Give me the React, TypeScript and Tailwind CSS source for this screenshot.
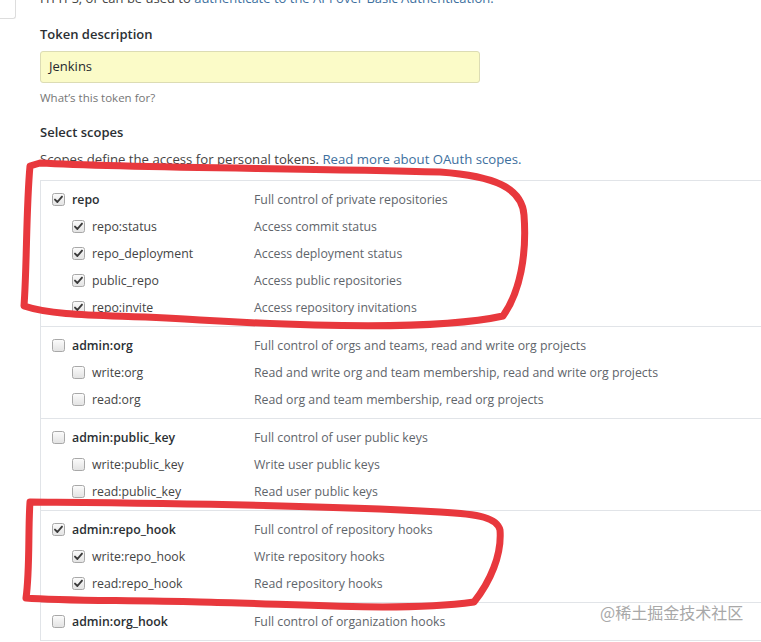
import React from 'react';

type Scope = { name: string; desc: string; checked: boolean; children: { name: string; desc: string; checked: boolean }[] };

const scopes: Scope[] = [
  {
    name: 'repo',
    desc: 'Full control of private repositories',
    checked: true,
    children: [
      { name: 'repo:status', desc: 'Access commit status', checked: true },
      { name: 'repo_deployment', desc: 'Access deployment status', checked: true },
      { name: 'public_repo', desc: 'Access public repositories', checked: true },
      { name: 'repo:invite', desc: 'Access repository invitations', checked: true },
    ],
  },
  {
    name: 'admin:org',
    desc: 'Full control of orgs and teams, read and write org projects',
    checked: false,
    children: [
      { name: 'write:org', desc: 'Read and write org and team membership, read and write org projects', checked: false },
      { name: 'read:org', desc: 'Read org and team membership, read org projects', checked: false },
    ],
  },
  {
    name: 'admin:public_key',
    desc: 'Full control of user public keys',
    checked: false,
    children: [
      { name: 'write:public_key', desc: 'Write user public keys', checked: false },
      { name: 'read:public_key', desc: 'Read user public keys', checked: false },
    ],
  },
  {
    name: 'admin:repo_hook',
    desc: 'Full control of repository hooks',
    checked: true,
    children: [
      { name: 'write:repo_hook', desc: 'Write repository hooks', checked: true },
      { name: 'read:repo_hook', desc: 'Read repository hooks', checked: true },
    ],
  },
  {
    name: 'admin:org_hook',
    desc: 'Full control of organization hooks',
    checked: false,
    children: [],
  },
];

function Box({ checked }: { checked: boolean }) {
  return (
    <svg width="13" height="13" viewBox="0 0 13 13" className="shrink-0">
      <defs>
        <linearGradient id="cbg" x1="0" y1="0" x2="0" y2="1">
          <stop offset="0" stopColor="#fcfcfc" />
          <stop offset="1" stopColor="#e2e2e2" />
        </linearGradient>
      </defs>
      <rect x="0.5" y="0.5" width="12" height="12" rx="2" fill="url(#cbg)" stroke="#a8a8a8" />
      {checked && <path d="M3 6.6 L5.4 9 L10 3.6" fill="none" stroke="#3a3a3a" strokeWidth="1.9" strokeLinecap="round" strokeLinejoin="round" />}
    </svg>
  );
}

function Row({ name, desc, checked, child }: { name: string; desc: string; checked: boolean; child?: boolean }) {
  return (
    <div className="grid grid-cols-[213px_1fr] h-[27px] items-center text-[12.3px] leading-[16px]">
      <div className={child ? 'flex items-center gap-[7px] pl-[31px]' : 'flex items-center gap-[7px] pl-[11px]'}>
        <Box checked={checked} />
        <span className={child ? 'pt-[1px] text-[#444]' : 'pt-[1px] font-semibold text-[#2b2f33]'}>{name}</span>
      </div>
      <div className="pt-[1px] text-[#5f656b] whitespace-nowrap">{desc}</div>
    </div>
  );
}

export default function App() {
  return (
    <div
      className="relative w-[761px] h-[642px] overflow-hidden bg-white text-[13px] flex"
      style={{ fontFamily: '"Open Sans", "Noto Sans", Arial, sans-serif' }}
    >
      <div className="w-[16px] h-[19px] border-r border-b border-[#ddd] rounded-br-[3px] shrink-0" />
      <div className="pl-[24px] flex-1 flex flex-col">
        <p className="leading-[20px] -mt-[12px] text-[#444] whitespace-nowrap">
          HTTPS, or can be used to <span className="text-[#3d6f9e]">authenticate to the API over Basic Authentication.</span>
        </p>
        <div className="leading-[20px] mt-[16px] text-[13px] font-semibold text-[#2b2f33]">Token description</div>
        <div className="mt-[7px] w-[440px] h-[32px] bg-[#fbfbc8] border border-[#dcdcb4] rounded-[3px] flex items-center px-[8px] text-[#24292e]">
          Jenkins
        </div>
        <div className="leading-[16px] mt-[7px] text-[11.5px] text-[#767676]">What’s this token for?</div>
        <div className="leading-[20px] mt-[16px] text-[13px] font-semibold text-[#2b2f33]">Select scopes</div>
        <div className="leading-[20px] mt-[7px] text-[13.2px] text-[#444]">
          Scopes define the access for personal tokens. <span className="text-[#3d6f9e]">Read more about OAuth scopes.</span>
        </div>
        <div className="mt-[11px] border-t border-l border-[#e1e4e8]">
          {scopes.map((s) => (
            <div key={s.name} className="py-[5px] border-b border-[#e1e4e8]">
              <Row name={s.name} desc={s.desc} checked={s.checked} />
              {s.children.map((c) => (
                <Row key={c.name} name={c.name} desc={c.desc} checked={c.checked} child />
              ))}
            </div>
          ))}
        </div>
      </div>

      <svg className="absolute inset-0 pointer-events-none" width="761" height="642" viewBox="0 0 761 642">
        <path
          d="M40 163 C130 168 300 168 440 172 C495 176 522 188 524 215 C527 255 520 292 503 316 C440 330 320 327 200 320 C120 314 60 318 24 306 C27 265 26 210 30 166 Z"
          fill="none"
          stroke="#e8383d"
          strokeWidth="7"
          strokeLinejoin="round"
        />
        <path
          d="M30 502 C130 503 300 504 440 512 C480 514 497 518 500 530 C502 555 490 582 474 602 C400 612 300 604 200 602 C120 600 60 601 26 598 C30 570 28 530 30 502 Z"
          fill="none"
          stroke="#e8383d"
          strokeWidth="7"
          strokeLinejoin="round"
        />
      </svg>
      <div
        className="absolute left-[600px] top-[602px] text-[16px] text-[#a8a8a8] leading-[20px]"
        style={{ fontFamily: '"Noto Sans CJK SC", "Noto Sans", sans-serif' }}
      >
        @稀土掘金技术社区
      </div>
    </div>
  );
}
